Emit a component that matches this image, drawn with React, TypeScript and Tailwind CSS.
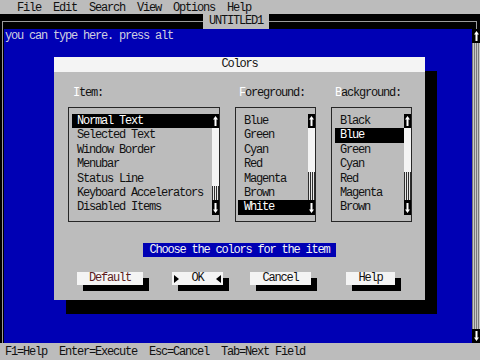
const GRAY = "bg-[#bcbcbc]";

const Arrow = ({ down }: { down?: boolean }) => (
  <svg width="5" height="10" viewBox="0 0 5 10" className={down ? "rotate-180" : ""}>
    <path d="M2.5 0 L5 3.5 H3.5 V10 H1.5 V3.5 H0 Z" fill="#ffffff" />
  </svg>
);

const Tri = ({ left }: { left?: boolean }) => (
  <svg width="5" height="8" viewBox="0 0 5 8">
    <path d={left ? "M5 0 L0 4 L5 8 Z" : "M0 0 L5 4 L0 8 Z"} fill="#000000" />
  </svg>
);

type Cell = "up" | "down" | "white" | "dither";

const ScrollCell = ({ kind, w }: { kind: Cell; w: string }) => {
  if (kind === "up" || kind === "down")
    return (
      <div className={`${w} h-full bg-black flex items-center justify-center`}>
        <Arrow down={kind === "down"} />
      </div>
    );
  if (kind === "white") return <div className={`${w} h-full bg-[#f4f4f4]`} />;
  return (
    <div
      className={`${w} h-full bg-[repeating-linear-gradient(90deg,#2e2e2e_0_1px,#e8e8e8_1px_2px)]`}
    />
  );
};

const ListBox = ({
  items,
  selected,
  width,
  barInset,
  textInset,
  whiteRows,
}: {
  items: string[];
  selected: number;
  width: string;
  barInset: string;
  textInset: string;
  whiteRows: number;
}) => (
  <div className={`${width} h-[115px] border border-[#262626] py-[6px] ${barInset} flex flex-col`}>
    {items.map((it, i) => {
      const kind: Cell = i === 0 ? "up" : i === items.length - 1 ? "down" : i <= whiteRows ? "white" : "dither";
      const sel = i === selected;
      return (
        <div key={it} className={`h-[14.4px] flex ${sel ? "bg-black text-white" : "text-[#111]"}`}>
          <div className={`flex-1 ${textInset} whitespace-pre leading-[14.4px]`}>{it}</div>
          <ScrollCell kind={kind} w="w-[7px]" />
        </div>
      );
    })}
  </div>
);

const Button = ({ label, w, color }: { label: string; w: string; color?: string }) => (
  <div
    className={`${w} h-[13px] bg-[#f4f4f4] shadow-[6px_6px_0_#000] flex items-center justify-center leading-[13px] ${color ?? "text-[#111]"}`}
  >
    {label}
  </div>
);

export default function App() {
  return (
    <div className="w-[480px] h-[360px] flex flex-col overflow-hidden font-['Liberation_Mono',monospace] text-[12px] tracking-[-1.2px] bg-black">
      {/* menu bar */}
      <div className={`h-[14px] ${GRAY} pl-[5px] pt-[2px] leading-[12px] whitespace-pre text-[#111]`}>
        {"  File  Edit  Search  View  Options  Help"}
      </div>

      {/* window title row */}
      <div className="h-[15px] bg-black flex">
        <div className="ml-[2px] mt-[7px] w-[201px] border-t border-l border-[#9c9c9c]" />
        <div className={`h-[15px] ${GRAY} whitespace-pre leading-[15px] text-[#111]`}>{" UNTITLED1 "}</div>
        <div className="mr-[3px] mt-[7px] flex-1 border-t border-r border-[#9c9c9c]" />
      </div>

      {/* editor */}
      <div className="h-[314px] flex">
        <div className="w-[4px] bg-black flex">
          <div className="ml-[2px] w-px bg-[#9c9c9c]" />
        </div>
        <div className="flex-1 bg-[#0000b4] relative">
          <div className="h-[15px] pl-px leading-[15px] text-[#cfcfe0]">you can type here. press alt</div>

          {/* Colors dialog */}
          <div className={`absolute left-[50px] top-[28px] w-[371px] ${GRAY} shadow-[12px_14px_0_#000] flex flex-col`}>
            <div className="h-[15px] bg-[#f4f4f4] text-center leading-[15px] text-[#111]">Colors</div>
            <div className="pt-[14px] pl-[14px] flex gap-[15px]">
              <div className="flex flex-col gap-[7px]">
                <div className="h-[14px] pl-[5px] leading-[14px] text-[#111]">
                  <span className="text-white">I</span>tem:
                </div>
                <ListBox
                  items={[
                    "Normal Text",
                    "Selected Text",
                    "Window Border",
                    "Menubar",
                    "Status Line",
                    "Keyboard Accelerators",
                    "Disabled Items",
                  ]}
                  selected={0}
                  width="w-[152px]"
                  barInset="pl-[3px]"
                  textInset="pl-[5px]"
                  whiteRows={4}
                />
              </div>
              <div className="flex flex-col gap-[7px]">
                <div className="h-[14px] pl-[4px] leading-[14px] text-[#111]">
                  <span className="text-white">F</span>oreground:
                </div>
                <ListBox
                  items={["Blue", "Green", "Cyan", "Red", "Magenta", "Brown", "White"]}
                  selected={6}
                  width="w-[81px]"
                  barInset="pl-[2px]"
                  textInset="pl-[6px]"
                  whiteRows={3}
                />
              </div>
              <div className="flex flex-col gap-[7px]">
                <div className="h-[14px] pl-[4px] leading-[14px] text-[#111]">
                  <span className="text-white">B</span>ackground:
                </div>
                <ListBox
                  items={["Black", "Blue", "Green", "Cyan", "Red", "Magenta", "Brown"]}
                  selected={1}
                  width="w-[81px]"
                  barInset="pl-[3px]"
                  textInset="pl-[5px]"
                  whiteRows={3}
                />
              </div>
            </div>

            <div className="mt-[21px] self-center h-[14px] px-[6px] bg-[#0000b4] text-[#f4f4f4] leading-[14px] whitespace-pre">
              Choose the colors for the item
            </div>

            <div className="mt-[15px] mb-[15px] pl-[23px] flex">
              <Button label="Default" w="w-[66px]" color="text-[#5c1c1c]" />
              <div className="ml-[29px] w-[51px] h-[13px] bg-[#f4f4f4] shadow-[6px_6px_0_#000] flex items-center justify-between px-[2px] text-[#111] leading-[13px]">
                <Tri />
                <span>OK</span>
                <Tri left />
              </div>
              <div className="ml-[27px]">
                <Button label="Cancel" w="w-[61px]" />
              </div>
              <div className="ml-[35px]">
                <Button label="Help" w="w-[49px]" />
              </div>
            </div>
          </div>
        </div>
        {/* editor scroll bar */}
        <div className="w-[8px] flex flex-col">
          <div className="h-[14px] bg-black flex items-center justify-center">
            <Arrow />
          </div>
          <div className="flex-1 bg-[repeating-linear-gradient(90deg,#7a7a7a_0_1px,#c8c8c8_1px_2px)]" />
          <div className="h-[14px] bg-black flex items-center justify-center">
            <Arrow down />
          </div>
        </div>
      </div>

      {/* status bar */}
      <div className={`h-[17px] ${GRAY} pl-[5px] flex items-center whitespace-pre text-[#111]`}>
        {"F1=Help  Enter=Execute  Esc=Cancel  Tab=Next Field"}
      </div>
    </div>
  );
}
